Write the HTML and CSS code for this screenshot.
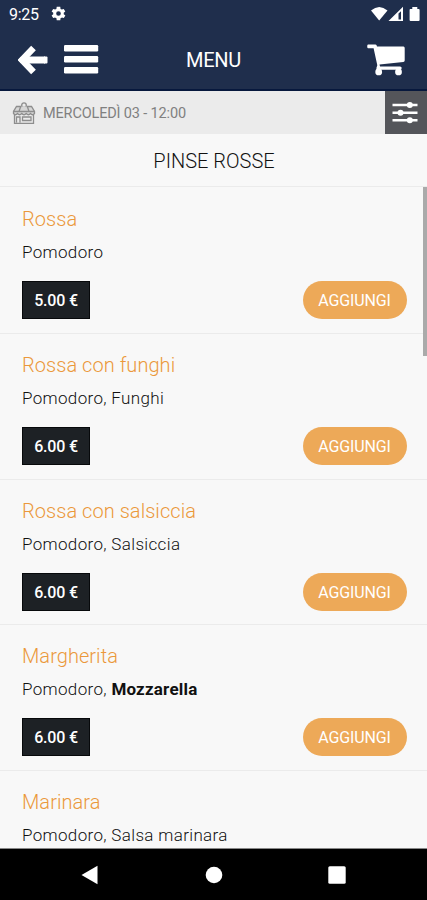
FILE: index.html
```html
<!DOCTYPE html>
<html lang="it">
<head>
<meta charset="utf-8">
<title>Menu</title>
<link rel="stylesheet" href="styles.css">
</head>
<body>
<div class="screen">
  <header class="top">
    <div class="status">
      <span class="clock">9:25</span>
      <svg class="gear" width="17" height="17" viewBox="0 0 24 24"><path fill="#fff" fill-rule="evenodd" d="M19.400 13a7.500 7.500 0 0 0 0-2l2.200-1.700-2.200-3.800-2.700 1a8 8 0 0 0-1.800-1L14.500 2.500h-5L9 5.500a8 8 0 0 0-1.800 1l-2.700-1-2.200 3.800L4.600 11a7.500 7.500 0 0 0 0 2l-2.300 1.700 2.200 3.800 2.700-1a8 8 0 0 0 1.800 1l.5 3h5l.5-3a8 8 0 0 0 1.800-1l2.700 1 2.200-3.800zM12 15.300a3.300 3.300 0 1 1 0-6.600 3.300 3.300 0 0 1 0 6.600z"/></svg>
      <svg class="signals" width="50" height="17" viewBox="0 0 50 17">
        <path fill="#fff" d="M0 4.500Q8.200-2.500 16.500 4.500L8.200 14.500z"/>
        <path fill="#fff" fill-rule="evenodd" d="M17.500 15L32 .8V15zM27.500 7.500V13.500H30V5.200z"/>
        <path fill="#fff" d="M39.300 3h2V1h5v2h1.500q.8 0 .8 1v10q0 1-1 1h-8q-1 0-1-1V4q0-1 .7-1z"/>
      </svg>
    </div>
    <div class="appbar">
      <svg class="back" width="30" height="32" viewBox="0 0 30 32"><path d="M15.500 4L4 16l11.500 12" fill="none" stroke="#fff" stroke-width="6.500"/><path d="M0 16l3-3.200v6.400z" fill="#fff"/><path d="M5 16h22" fill="none" stroke="#fff" stroke-width="7"/><path d="M26 12.500h2.500q1 0 1 1v5q0 1-1 1H26z" fill="#fff"/></svg>
      <svg class="burger" width="35" height="30" viewBox="0 0 35 30" fill="#fff"><rect x="0" y="1" width="34.200" height="6.500" rx="1.200"/><rect x="0" y="12" width="34.200" height="6.500" rx="1.200"/><rect x="0" y="23" width="34.200" height="6.500" rx="1.200"/></svg>
      <h1 class="heading">MENU</h1>
      <svg class="cart" width="38" height="33" viewBox="0 0 38 33"><path fill="#fff" fill-rule="evenodd" d="M1 1.500h7.500q1.200 0 1.500 2H36.500q1.200 0 1.200 1.500V17.500q0 1.400-1.400 1.600L12.500 21.400l.5 2H33q1.700 0 1.700 1.500T33 26.700H10.700q-1.600 0-1.300-1.800l.9-2.700L6.600 5.200H1q-.8 0-.8-1.800T1 1.500z"/><circle cx="11.700" cy="28.900" r="3.400" fill="#fff"/><circle cx="31.500" cy="28.900" r="3.400" fill="#fff"/></svg>
    </div>
  </header>
  <div class="slot">
    <svg class="shop" width="24" height="22" viewBox="0 0 24 22" fill="none" stroke="#8d8d8d" stroke-width="1.300"><circle cx="12" cy="3.200" r="2.300"/><path fill="#d6d6d6" d="M9.500 4.500H4.500L1.500 9.500v2q2 2.500 4 0 2 2.500 4.300 0 2.200 2.500 4.400 0 2.300 2.500 4.300 0 2 2.500 4 0v-2l-3-5h-5"/><path d="M1.500 9.500h21M8.500 5L7 9.500M15.500 5L17 9.500M2.500 12.500V21.300h19v-8.800M4.500 20.500V15H8v5.500M10.500 15h8.500v3.500h-8.500z"/></svg>
    <span class="when">MERCOLEDÌ 03 - 12:00</span>
    <div class="filter"><svg width="26" height="24" viewBox="0 0 26 24" fill="#fff"><path d="M.5 2.800h25v2.500H.5zM.5 10.500h25V13H.5zM.5 18h25v2.500H.5z"/><circle cx="17.800" cy="4" r="3"/><circle cx="8.500" cy="11.700" r="3"/><circle cx="17.800" cy="19.200" r="3"/></svg></div>
  </div>
  <h2 class="category">PINSE ROSSE</h2>
  <main class="list">
    <article class="item"><h3 class="name">Rossa</h3><p class="desc">Pomodoro</p><div class="buy"><span class="price">5.00 €</span><button class="add">AGGIUNGI</button></div></article>
    <article class="item"><h3 class="name">Rossa con funghi</h3><p class="desc">Pomodoro, Funghi</p><div class="buy"><span class="price">6.00 €</span><button class="add">AGGIUNGI</button></div></article>
    <article class="item"><h3 class="name">Rossa con salsiccia</h3><p class="desc">Pomodoro, Salsiccia</p><div class="buy"><span class="price">6.00 €</span><button class="add">AGGIUNGI</button></div></article>
    <article class="item"><h3 class="name">Margherita</h3><p class="desc">Pomodoro, <b>Mozzarella</b></p><div class="buy"><span class="price">6.00 €</span><button class="add">AGGIUNGI</button></div></article>
    <article class="item"><h3 class="name">Marinara</h3><p class="desc">Pomodoro, Salsa marinara</p></article>
    <div class="thumb"></div>
  </main>
  <nav class="system">
    <svg width="18" height="20" viewBox="0 0 18 20"><path d="M.5 10L16.500 .8V19.200z" fill="#fff"/></svg>
    <svg width="18" height="18" viewBox="0 0 18 18"><circle cx="9" cy="9" r="8.300" fill="#fff"/></svg>
    <svg width="18" height="18" viewBox="0 0 18 18"><rect x=".3" y=".3" width="17.400" height="17.400" rx="1.500" fill="#fff"/></svg>
  </nav>
</div>
</body>
</html>
```
FILE: styles.css
```css
* { box-sizing: border-box; margin: 0; padding: 0; }
body { font-family: Roboto, "Liberation Sans", sans-serif; }
svg { display: block; flex: none; }
.screen { width: 427px; height: 900px; display: flex; flex-direction: column; overflow: hidden; background: #f8f8f8; }
.top { height: 91px; flex: none; background: #1f2e4c; border-bottom: 2px solid #07183d; color: #fff; }
.status { height: 28px; display: flex; align-items: center; padding: 0 6px 0 9px; }
.clock { font-size: 16px; line-height: 28px; letter-spacing: -.3px; padding-top: 1px; }
.gear { margin-left: 11px; margin-top: -1px; }
.signals { margin-left: auto; }
.appbar { height: 63px; display: flex; align-items: center; padding: 0 22px 0 18px; }
.burger { margin-left: 16px; margin-top: -1px; }
.heading { margin-left: 87px; font-size: 20px; font-weight: 400; line-height: 24px; letter-spacing: -.3px; }
.cart { margin-left: auto; }
.slot { height: 43px; flex: none; display: flex; align-items: center; padding-left: 12px; background: #ebebeb; }
.when { margin-left: 7px; margin-top: 3px; font-size: 14.500px; line-height: 20px; color: #808080; letter-spacing: -.15px; }
.filter { width: 42px; height: 43px; margin-left: auto; background: #54555a; display: flex; align-items: center; justify-content: center; padding-right: 2px; }
.category { height: 53px; flex: none; border-bottom: 1px solid #ebebeb; padding-left: 1px; text-align: center; font-size: 20px; line-height: 54px; font-weight: 300; color: #111; }
.list { position: relative; flex: 1; min-height: 0; overflow: hidden; border-bottom: 1px solid #888; }
.item { height: 145.750px; padding: 18px 20.500px 0 22px; box-shadow: 0 1px 0 #ebebeb; }
.name { font-size: 20px; line-height: 28px; font-weight: 300; color: #eb983b; letter-spacing: .05px; }
.desc { margin-top: 7px; font-size: 17px; line-height: 24px; font-weight: 300; color: #111; letter-spacing: .34px; }
.desc b { font-weight: 700; letter-spacing: .2px; }
.buy { margin-top: 17px; display: flex; justify-content: space-between; }
.price { width: 68px; height: 38px; background: #1d2125; border: 1px solid #07090b; color: #fff; text-align: center; font-size: 16px; line-height: 38px; font-weight: 500; letter-spacing: -.2px; }
.add { width: 104px; height: 38px; padding-top: 1px; border: 0; border-radius: 19px; background: #eda958; color: #fff; font: 400 16px/38px Roboto, "Liberation Sans", sans-serif; letter-spacing: -.1px; }
.thumb { position: absolute; top: -1px; right: 0; width: 4px; height: 170px; background: #aaa; }
.system { height: 51px; flex: none; display: flex; align-items: center; justify-content: space-between; padding: 0 81px; background: #000; }
```
